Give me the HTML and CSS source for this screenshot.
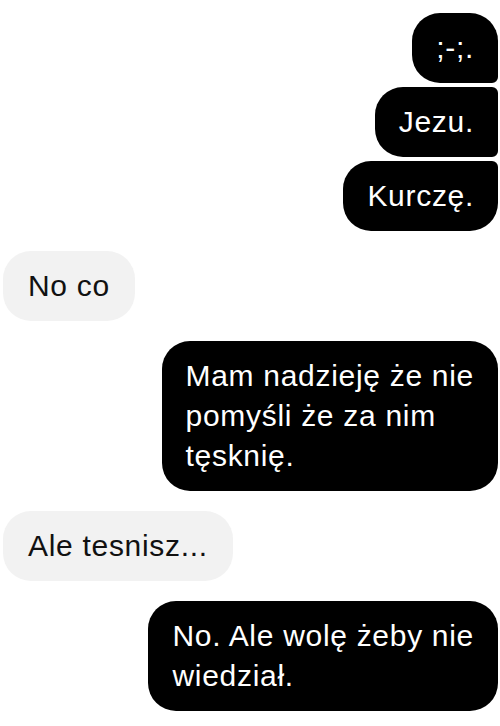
FILE: index.html
```html
<!DOCTYPE html>
<html lang="pl">
<head>
  <meta charset="UTF-8">
  <meta name="viewport" content="width=device-width, initial-scale=1.0">
  <title>Czat</title>
  <link rel="stylesheet" href="styles.css">
</head>
<body>
    <div class="chat">
        <div class="group sent">
            <div class="bubble first">;-;.</div>
            <div class="bubble middle">Jezu.</div>
            <div class="bubble last">Kurczę.</div>
        </div>

        <div class="group received">
            <div class="bubble">No co</div>
        </div>

        <div class="group sent">
            <div class="bubble">Mam nadzieję że nie<br>pomyśli że za nim<br>tęsknię.</div>
        </div>

        <div class="group received">
            <div class="bubble">Ale tesnisz...</div>
        </div>

        <div class="group sent">
            <div class="bubble">No. Ale wolę żeby nie<br>wiedział.</div>
        </div>
    </div>
</body>
</html>
```

FILE: styles.css
```css
* {
  margin: 0;
  padding: 0;
  box-sizing: border-box;
}

body {
  background: #fff;
  font-family: 'Liberation Sans', Arial, sans-serif;
}

.chat {
  display: flex;
  flex-direction: column;
  gap: 20px;
  padding: 13px 2px 0 3px;
}

.group {
  display: flex;
  flex-direction: column;
  gap: 4px;
}

.group.sent {
  align-items: flex-end;
}

.group.received {
  align-items: flex-start;
}

.bubble {
  font-size: 30px;
  line-height: 40px;
  letter-spacing: 0.7px;
  padding: 15px 24px;
  border-radius: 28px;
  white-space: nowrap;
}

.sent .bubble {
  background: #000;
  color: #fff;
}

.received .bubble {
  background: #f2f2f2;
  color: #111;
  padding: 15px 25px;
}

/* grouped sent bubbles get tight corners on the right */
.sent .bubble.first {
  border-bottom-right-radius: 6px;
}

.sent .bubble.middle {
  border-top-right-radius: 6px;
  border-bottom-right-radius: 6px;
}

.sent .bubble.last {
  border-top-right-radius: 6px;
}
```
